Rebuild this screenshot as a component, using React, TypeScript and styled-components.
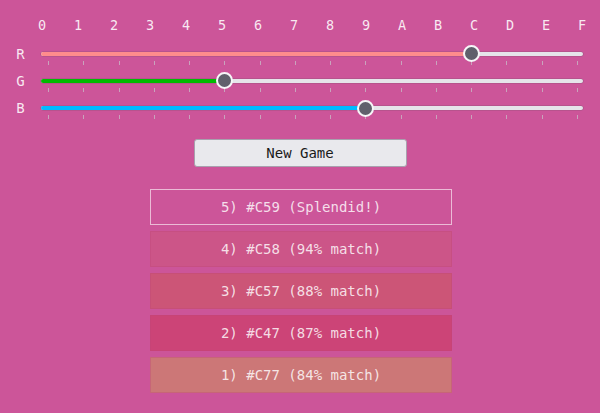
import React from "react";
import styled, { createGlobalStyle } from "styled-components";

const GlobalStyle = createGlobalStyle`
  body {
    margin:0;
    background:#cc5599;
    font-family:"DejaVu Sans Mono", "Liberation Mono", monospace;
  }
`;

const HEX = "0123456789ABCDEF".split("");

const channels = [
  { name: "R", value: 12, color: "#ff8c8c" },
  { name: "G", value: 5, color: "#00bb00" },
  { name: "B", value: 9, color: "#00bbff" }
];

const guesses = [
  { label: "5) #C59 (Splendid!)", color: "transparent", best: true },
  { label: "4) #C58 (94% match)", color: "#cc5588" },
  { label: "3) #C57 (88% match)", color: "#cc5577" },
  { label: "2) #C47 (87% match)", color: "#cc4477" },
  { label: "1) #C77 (84% match)", color: "#cc7777" }
];

const Page = styled.div`
  padding-top:17px;
  color:rgba(255,255,255,0.88);
`;

const DigitRow = styled.div`
  display:flex;
  padding-left:24px;
  height:16px;
  line-height:16px;
  font-size:13.5px;
`;

const Digit = styled.span`
  width:36px;
  flex:none;
  text-align:center;
`;

const SliderGrid = styled.div`
  display:grid;
  grid-template-columns:41px 542px;
  grid-auto-rows:27.33px;
  margin-top:7px;
`;

const Label = styled.div`
  display:flex;
  align-items:center;
  justify-content:center;
  font-size:14px;
`;

const TrackCell = styled.div`
  position:relative;
`;

const Track = styled.div`
  position:absolute;
  left:0;
  right:0;
  top:50%;
  height:4px;
  margin-top:-2px;
  border-radius:2px;
  background:#e6e4ea;
  box-shadow:0 0 0 0.5px rgba(120,80,110,0.5);
`;

const Fill = styled.div<{ $color: string }>`
  position:absolute;
  left:0;
  top:0;
  bottom:0;
  border-radius:2px;
  background:${({ $color }) => $color};
`;

const Tick = styled.div`
  position:absolute;
  top:calc(50% + 7px);
  width:1px;
  height:4px;
  background:rgba(200,190,200,0.75);
`;

const Thumb = styled.div`
  position:absolute;
  top:50%;
  width:13px;
  height:13px;
  margin:-8.5px 0 0 -8.5px;
  border-radius:50%;
  border:2px solid #f6f6f8;
  background:#60606c;
`;

const NewGameButton = styled.button`
  display:block;
  width:213px;
  height:28px;
  margin:17px auto 0;
  padding:0;
  background:#e9e9ed;
  border:1px solid #a8a0ae;
  border-radius:3px;
  color:#1a1a1a;
  font-family:inherit;
  font-size:14px;
`;

const GuessList = styled.div`
  display:flex;
  flex-direction:column;
  align-items:center;
  gap:6px;
  margin-top:22px;
  padding-left:2px;
`;

const GuessRow = styled.div<{ $color: string; $best?: boolean }>`
  box-sizing:border-box;
  width:302px;
  height:36px;
  display:flex;
  align-items:center;
  justify-content:center;
  font-size:14px;
  color:rgba(255,255,255,0.82);
  background:${({ $color }) => $color};
  border:1px solid ${({ $best }) => ($best ? "rgba(255,255,255,0.6)" : "rgba(190,70,120,0.35)")};
`;

const tickX = (i: number) => 7 + (i / 15) * 529;

export default function App() {
  return (
    <>
      <GlobalStyle />
      <Page>
        <DigitRow>
          {HEX.map((d) => (
            <Digit key={d}>{d}</Digit>
          ))}
        </DigitRow>
        <SliderGrid>
          {channels.map((c) => (
            <React.Fragment key={c.name}>
              <Label>{c.name}</Label>
              <TrackCell>
                <Track>
                  <Fill $color={c.color} style={{ width: tickX(c.value) }} />
                </Track>
                {HEX.map((d, i) => (
                  <Tick key={d} style={{ left: tickX(i) }} />
                ))}
                <Thumb style={{ left: tickX(c.value) }} />
              </TrackCell>
            </React.Fragment>
          ))}
        </SliderGrid>
        <NewGameButton>New Game</NewGameButton>
        <GuessList>
          {guesses.map((g) => (
            <GuessRow key={g.label} $color={g.color} $best={g.best}>
              {g.label}
            </GuessRow>
          ))}
        </GuessList>
      </Page>
    </>
  );
}
